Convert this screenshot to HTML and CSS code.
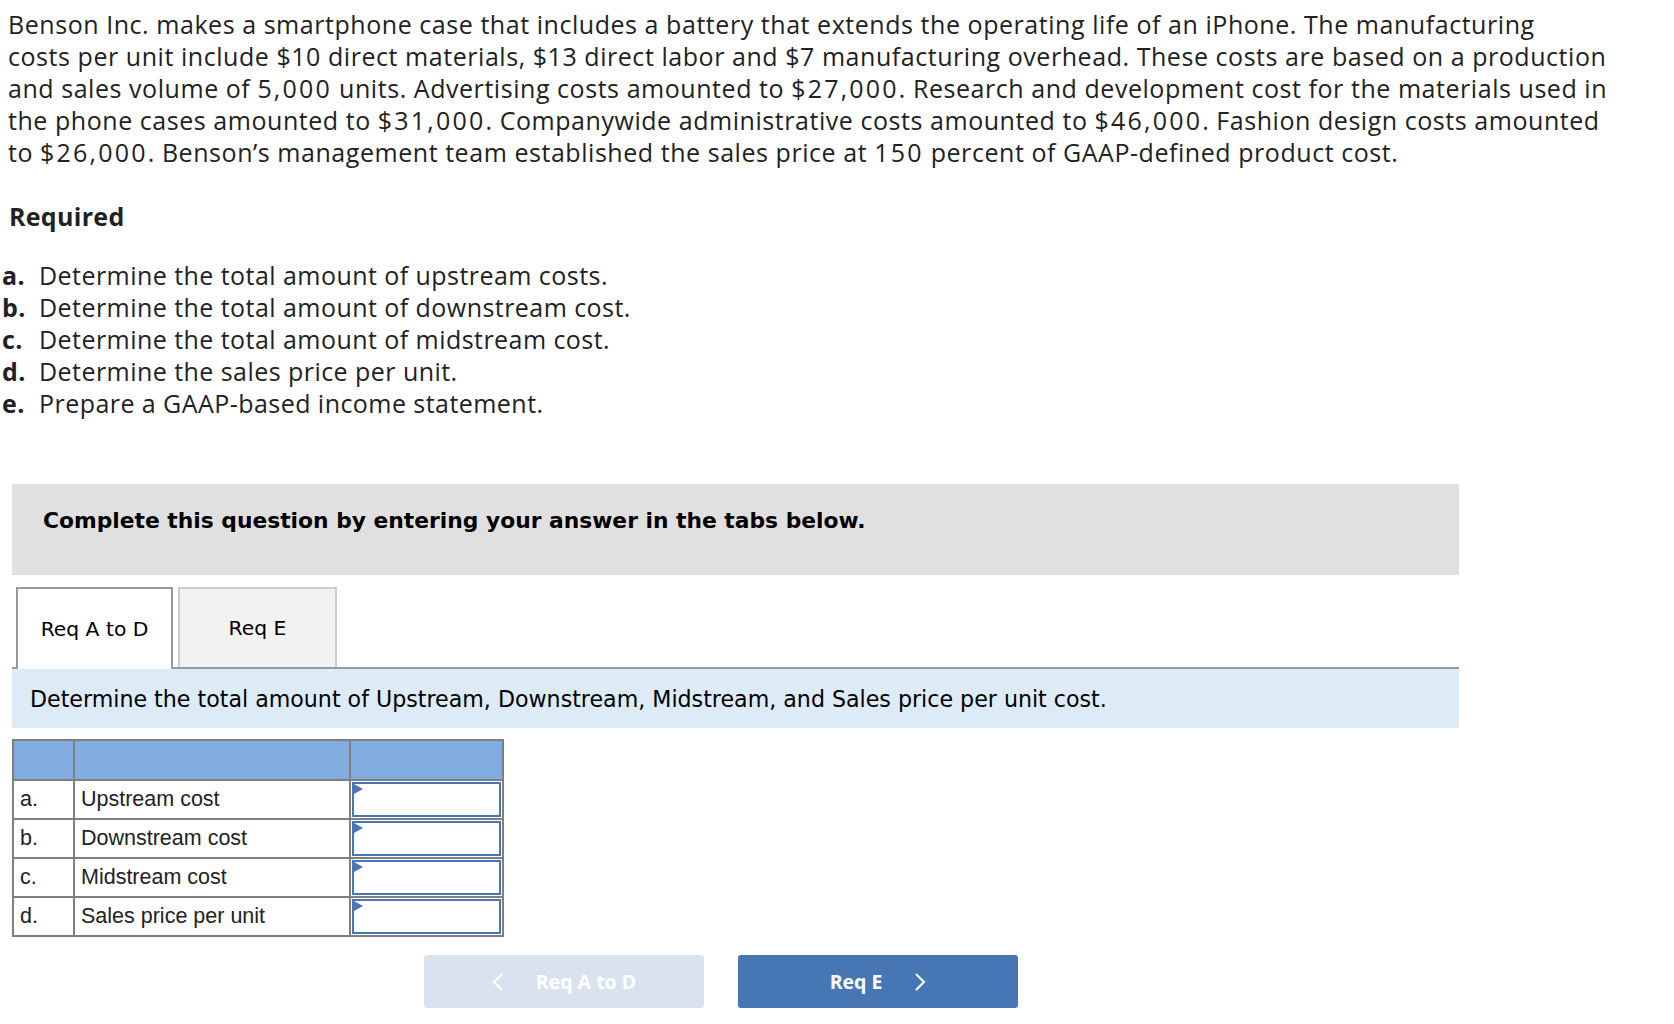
FILE: index.html
```html
<!DOCTYPE html>
<html lang="en">
<head>
<meta charset="utf-8">
<title>Benson Inc.</title>
<link rel="stylesheet" href="styles.css">
</head>
<body>
<main class="page">
<p class="intro">Benson Inc. makes a smartphone case that includes a battery that extends the operating life of an iPhone. The manufacturing<br>costs per unit include $10 direct materials, $13 direct labor and $7 manufacturing overhead. These costs are based on a production<br>and sales volume of <span class="num">5,000</span> units. Advertising costs amounted to <span class="num">$27,000</span>. Research and development cost for the materials used in<br>the phone cases amounted to <span class="num">$31,000</span>. Companywide administrative costs amounted to <span class="num">$46,000</span>. Fashion design costs amounted<br>to <span class="num">$26,000</span>. Benson’s management team established the sales price at <span class="num">150</span> percent of GAAP-defined product cost.</p>

<h3 class="req-title">Required</h3>
<ol class="req-list">
  <li><span class="lbl">a.</span><span>Determine the total amount of upstream costs.</span></li>
  <li><span class="lbl">b.</span><span>Determine the total amount of downstream cost.</span></li>
  <li><span class="lbl">c.</span><span>Determine the total amount of midstream cost.</span></li>
  <li><span class="lbl">d.</span><span>Determine the sales price per unit.</span></li>
  <li><span class="lbl">e.</span><span>Prepare a GAAP-based income statement.</span></li>
</ol>

<div class="qpanel">
  <div class="banner">Complete this question by entering your answer in the tabs below.</div>
  <div class="tabs">
    <div class="tab active">Req A to D</div>
    <div class="tab">Req E</div>
  </div>
  <div class="instr">Determine the total amount of Upstream, Downstream, Midstream, and Sales price per unit cost.</div>

  <table class="grid">
    <tr class="head"><td class="c1"></td><td class="c2"></td><td class="c3"></td></tr>
    <tr><td class="c1">a.</td><td class="c2">Upstream cost</td><td class="c3"><div class="inp"></div></td></tr>
    <tr><td class="c1">b.</td><td class="c2">Downstream cost</td><td class="c3"><div class="inp"></div></td></tr>
    <tr><td class="c1">c.</td><td class="c2">Midstream cost</td><td class="c3"><div class="inp"></div></td></tr>
    <tr><td class="c1">d.</td><td class="c2">Sales price per unit</td><td class="c3"><div class="inp"></div></td></tr>
  </table>

  <div class="nav">
    <button class="navbtn prev"><svg class="chev" width="12" height="20" viewBox="0 0 12 20"><path d="M10 2 L2 10 L10 18" fill="none" stroke="#fff" stroke-width="2.2"/></svg><span>Req A to D</span></button>
    <button class="navbtn next"><span>Req E</span><svg class="chev" width="12" height="20" viewBox="0 0 12 20"><path d="M2 2 L10 10 L2 18" fill="none" stroke="#fff" stroke-width="2.2"/></svg></button>
  </div>
</div>
</main>
</body>
</html>
```
FILE: styles.css
```css
body {
  margin: 0;
  font-family: "Open Sans", "Lato", sans-serif;
  color: #222;
  background: #fff;
}

.page {
  padding-top: 8px;
}

.intro {
  margin: 0 0 0 8px;
  white-space: nowrap;
  font-size: 25px;
  line-height: 32px;
  letter-spacing: 0.55px;
}
.intro .num {
  letter-spacing: 2.2px;
}

.req-title {
  margin: 32px 0 0 9px;
  font-size: 25px;
  line-height: 32px;
  font-weight: 700;
  letter-spacing: 0.3px;
}

.req-list {
  list-style: none;
  margin: 27px 0 0 2px;
  padding: 0;
  font-size: 25px;
  line-height: 32px;
  letter-spacing: 0.45px;
}
.req-list li {
  display: flex;
}
.req-list .lbl {
  flex: 0 0 37px;
  font-weight: 700;
}

.qpanel {
  margin: 65px 0 0 12px;
  width: 1447px;
  font-family: "DejaVu Sans", Verdana, sans-serif;
  color: #000;
}

.banner {
  background: #e0e0e0;
  height: 91px;
  box-sizing: border-box;
  padding: 24px 0 0 31px;
  font-size: 21.8px;
  font-weight: 700;
}

.tabs {
  display: flex;
  gap: 5px;
  margin-top: 12px;
  padding-left: 4px;
  border-bottom: 2px solid #999;
  height: 80px;
}
.tab {
  box-sizing: border-box;
  width: 159px;
  height: 80px;
  border: 2px solid #ccc;
  border-bottom: none;
  background: #f2f2f2;
  display: flex;
  align-items: center;
  justify-content: center;
  font-size: 20.3px;
}
.tab.active {
  width: 157px;
  height: 82px;
  border-color: #999;
  background: #fff;
  position: relative;
  z-index: 1;
}

.instr {
  background: #ddebf7;
  height: 59px;
  display: flex;
  align-items: center;
  padding-left: 18px;
  font-size: 22.15px;
}

.grid {
  margin-top: 11px;
  border-collapse: collapse;
  font-family: "Liberation Sans", Arial, sans-serif;
  font-size: 21.5px;
  color: #222;
}
.grid td {
  border: 2px solid #7f7f7f;
  height: 37px;
  padding: 0 0 0 6px;
  box-sizing: border-box;
}
.grid .head td {
  background: #80acdf;
  height: 40px;
}
.grid .c1 { width: 61px; }
.grid .c2 { width: 276px; }
.grid .c3 { width: 153px; padding: 0; }

.inp {
  position: relative;
  height: 35px;
  margin: 1px;
  border: 2px solid #4a76b6;
  background: #fff;
  box-sizing: border-box;
}
.inp::before {
  content: "";
  position: absolute;
  left: 0;
  top: 0;
  border-left: 9px solid #4a76b6;
  border-top: 5px solid transparent;
  border-bottom: 5px solid transparent;
}

.nav {
  display: flex;
  gap: 34px;
  margin-top: 18px;
  padding-left: 412px;
}
.navbtn {
  box-sizing: border-box;
  width: 280px;
  height: 53px;
  border: none;
  border-radius: 3px;
  display: flex;
  align-items: center;
  justify-content: center;
  gap: 32px;
  color: #fff;
  font-family: "Open Sans", sans-serif;
  font-size: 19.5px;
  font-weight: 700;
}
.navbtn.prev { background: #d9e3ef; }
.navbtn.next { background: #4676b3; }
```
